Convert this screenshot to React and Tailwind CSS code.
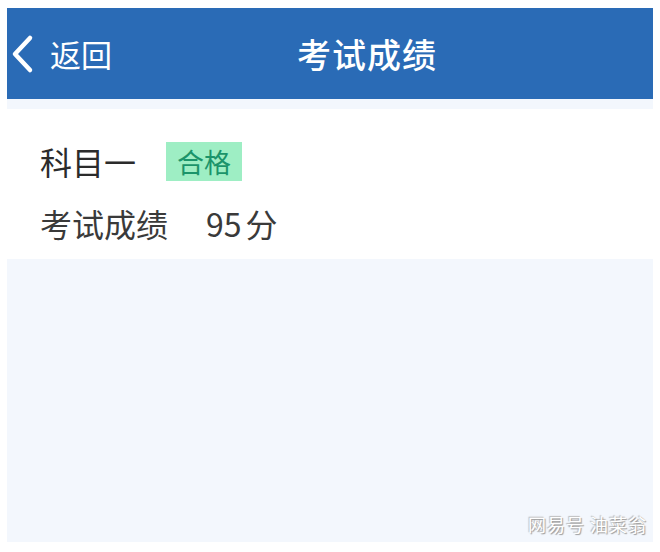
import React from 'react'

export default function App() {
  return (
    <div
      className="w-[660px] h-[552px] bg-white px-[7px] pt-[8px] pb-[10px] flex flex-col"
      style={{ fontFamily: '"Noto Sans CJK SC", "Noto Sans", sans-serif' }}
    >
      <div className="h-[91px] bg-[#2a6bb6] flex items-center relative shrink-0">
        <div className="flex items-center pl-[2px] text-white">
          <svg width="26" height="40" viewBox="0 0 26 40" fill="none">
            <path d="M21 4 L6 20 L21 36" stroke="white" strokeWidth="4.5" strokeLinecap="round" strokeLinejoin="round" />
          </svg>
          <span className="ml-[15px] text-[31px] leading-none">返回</span>
        </div>
        <div className="absolute inset-0 flex items-center justify-center pointer-events-none">
          <span className="text-[34px] font-medium text-white leading-none tracking-[1px] ml-[74px]">考试成绩</span>
        </div>
      </div>
      <div className="flex-1 bg-[#f3f7fd] pt-[10px] relative">
        <div className="bg-white h-[150px] px-[33px] pt-[32px] flex flex-col gap-[22px]">
          <div className="flex items-center gap-[30px] h-[40px]">
            <span className="text-[32px] leading-none text-[#2b2b2b]">科目一</span>
            <span className="bg-[#9eeec4] text-[#1b946a] text-[27px] leading-none px-[11px] py-[6px]">合格</span>
          </div>
          <div className="flex items-center gap-[38px] h-[40px]">
            <span className="text-[32px] leading-none text-[#3a3a3a]">考试成绩</span>
            <span className="text-[32px] leading-none text-[#3a3a3a]">95<span className="ml-[4px]">分</span></span>
          </div>
        </div>
        <div className="absolute right-[6px] bottom-[4px] text-[18px] text-white [text-shadow:1px_1px_1px_#999,-1px_-1px_1px_#bbb] tracking-[1px]">
          网易号 油菜翁
        </div>
      </div>
    </div>
  )
}
